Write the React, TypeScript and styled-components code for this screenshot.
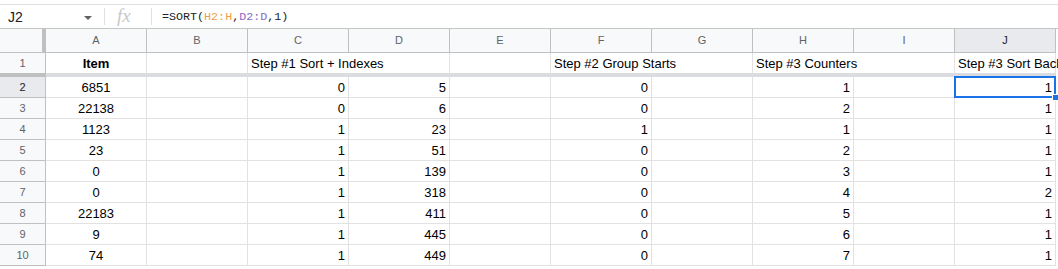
import React from 'react';
import styled, { createGlobalStyle } from 'styled-components';

const GlobalStyle = createGlobalStyle`
  html, body {
    margin: 0;
    padding: 0;
    background: #ffffff;
    overflow: hidden;
  }
  body {
    font-family: Arial, 'Liberation Sans', sans-serif;
  }
`;

const COLUMNS = ['A', 'B', 'C', 'D', 'E', 'F', 'G', 'H', 'I', 'J'];

type Align = 'left' | 'center' | 'right';

interface CellData {
  text: string;
  align?: Align;
  bold?: boolean;
  overflow?: boolean;
}

const titleRow: Record<string, CellData> = {
  A: { text: 'Item', align: 'center', bold: true },
  C: { text: 'Step #1 Sort + Indexes', overflow: true },
  F: { text: 'Step #2 Group Starts', overflow: true },
  H: { text: 'Step #3 Counters', overflow: true },
  J: { text: 'Step #3 Sort Back', overflow: true },
};

// item, sort flag, index, group start, counter, sorted back
const data: [string, string, string, string, string, string][] = [
  ['6851', '0', '5', '0', '1', '1'],
  ['22138', '0', '6', '0', '2', '1'],
  ['1123', '1', '23', '1', '1', '1'],
  ['23', '1', '51', '0', '2', '1'],
  ['0', '1', '139', '0', '3', '1'],
  ['0', '1', '318', '0', '4', '2'],
  ['22183', '1', '411', '0', '5', '1'],
  ['9', '1', '445', '0', '6', '1'],
  ['74', '1', '449', '0', '7', '1'],
];

const toRow = (r: string[]): Record<string, CellData> => ({
  A: { text: r[0], align: 'center' },
  C: { text: r[1], align: 'right' },
  D: { text: r[2], align: 'right' },
  F: { text: r[3], align: 'right' },
  H: { text: r[4], align: 'right' },
  J: { text: r[5], align: 'right' },
});

const App = () => {
  return (
    <>
      <GlobalStyle />
      <Page>
        <TopStrip />
        <FormulaBar>
          <NameBox>
            <span>J2</span>
            <Caret />
          </NameBox>
          <Divider />
          <Fx>fx</Fx>
          <Divider />
          <Formula>
            =SORT(<RangeA>H2:H</RangeA>,<RangeB>D2:D</RangeB>,1)
          </Formula>
        </FormulaBar>

        <Sheet>
          <Corner />
          {COLUMNS.map((c) => (
            <ColHeader key={c} $selected={c === 'J'}>
              {c}
            </ColHeader>
          ))}

          <RowHeader $selected={false}>1</RowHeader>
          {COLUMNS.map((c) => {
            const cell = titleRow[c];
            return (
              <Cell
                key={c}
                $align={cell?.align ?? 'left'}
                $bold={!!cell?.bold}
                $noRight={!!cell?.overflow && c !== 'J'}
              >
                {cell?.text}
              </Cell>
            );
          })}

          <FreezeCorner />
          <FreezeLine />

          {data.map((r, i) => {
            const row = toRow(r);
            const rowNum = i + 2;
            return (
              <React.Fragment key={rowNum}>
                <RowHeader $selected={rowNum === 2}>{rowNum}</RowHeader>
                {COLUMNS.map((c) => {
                  const cell = row[c];
                  const Comp = rowNum === 2 && c === 'J' ? ActiveCell : Cell;
                  return (
                    <Comp key={c} $align={cell?.align ?? 'left'} $bold={false} $noRight={false}>
                      {cell?.text}
                    </Comp>
                  );
                })}
              </React.Fragment>
            );
          })}
        </Sheet>
      </Page>
    </>
  );
};

export default App;

const Page = styled.div`
  width: 1058px;
  height: 269px;
  overflow: hidden;
`;

const TopStrip = styled.div`
  height: 4px;
  border-bottom: 1px solid #e1e1e1;
`;

const FormulaBar = styled.div`
  height: 23px;
  display: flex;
  align-items: center;
  border-bottom: 1px solid #c4c7c5;
  color: #202124;
`;

const NameBox = styled.div`
  width: 96px;
  padding-left: 8px;
  box-sizing: border-box;
  display: flex;
  align-items: center;
  justify-content: space-between;
  padding-right: 4px;
  font-size: 14px;
  color: #202124;
`;

const Caret = styled.span`
  width: 0;
  height: 0;
  border-left: 4px solid transparent;
  border-right: 4px solid transparent;
  border-top: 4px solid #5f6368;
  margin-top: 2px;
`;

const Divider = styled.div`
  width: 1px;
  height: 17px;
  background: #e0e0e0;
  margin: 0 0 0 8px;
`;

const Fx = styled.span`
  width: 34px;
  margin-left: 4px;
  font-family: 'Liberation Serif', 'DejaVu Serif', serif;
  font-style: italic;
  font-size: 19px;
  color: #c8c8c8;
  line-height: 1;
  padding-left: 8px;
  box-sizing: border-box;
  margin-top: -2px;
`;

const Formula = styled.span`
  margin-left: 10px;
  font-family: 'Liberation Mono', 'DejaVu Sans Mono', monospace;
  font-size: 11.7px;
  color: #202124;
`;

const RangeA = styled.span`
  color: #f29d48;
`;

const RangeB = styled.span`
  color: #8868c8;
`;

const Sheet = styled.div`
  display: grid;
  grid-template-columns: 46px repeat(10, 101px);
  grid-auto-rows: auto;
  font-size: 13px;
  color: #000000;
`;

const Corner = styled.div`
  height: 23px;
  background: #f8f9fa;
  border-right: 4px solid #c0c0c0;
  border-bottom: 1px solid #c0c0c0;
  box-sizing: content-box;
  width: 42px;
`;

const ColHeader = styled.div<{ $selected: boolean }>`
  height: 23px;
  line-height: 23px;
  text-align: center;
  font-size: 11px;
  color: ${(p) => (p.$selected ? '#202124' : '#5f6368')};
  background: ${(p) => (p.$selected ? '#e8eaed' : '#f8f9fa')};
  border-right: 1px solid #c0c0c0;
  border-bottom: 1px solid #c0c0c0;
`;

const RowHeader = styled.div<{ $selected: boolean }>`
  height: 20px;
  line-height: 20px;
  text-align: center;
  font-size: 11px;
  color: ${(p) => (p.$selected ? '#202124' : '#5f6368')};
  background: ${(p) => (p.$selected ? '#e8eaed' : '#f8f9fa')};
  border-right: 1px solid #c0c0c0;
  border-bottom: 1px solid #c0c0c0;
`;

const FreezeCorner = styled.div`
  height: 4px;
  background: #c0c0c0;
  margin-top: -1px;
`;

const FreezeLine = styled.div`
  grid-column: 2 / -1;
  height: 4px;
  background: #dadce0;
  margin-top: -1px;
`;

const Cell = styled.div<{ $align: Align; $bold: boolean; $noRight: boolean }>`
  height: 20px;
  line-height: 21px;
  padding: 0 3px;
  text-align: ${(p) => p.$align};
  font-weight: ${(p) => (p.$bold ? 700 : 400)};
  white-space: nowrap;
  overflow: visible;
  border-right: 1px solid ${(p) => (p.$noRight ? 'transparent' : '#e2e2e3')};
  border-bottom: 1px solid #e2e2e3;
`;

const ActiveCell = styled(Cell)`
  position: relative;

  &::before {
    content: '';
    position: absolute;
    left: -1px;
    top: -1px;
    right: -1px;
    bottom: -1px;
    border: 2px solid #1a73e8;
  }

  &::after {
    content: '';
    position: absolute;
    right: -4px;
    bottom: -4px;
    width: 5px;
    height: 5px;
    background: #1a73e8;
    border: 1px solid #ffffff;
  }
`;
